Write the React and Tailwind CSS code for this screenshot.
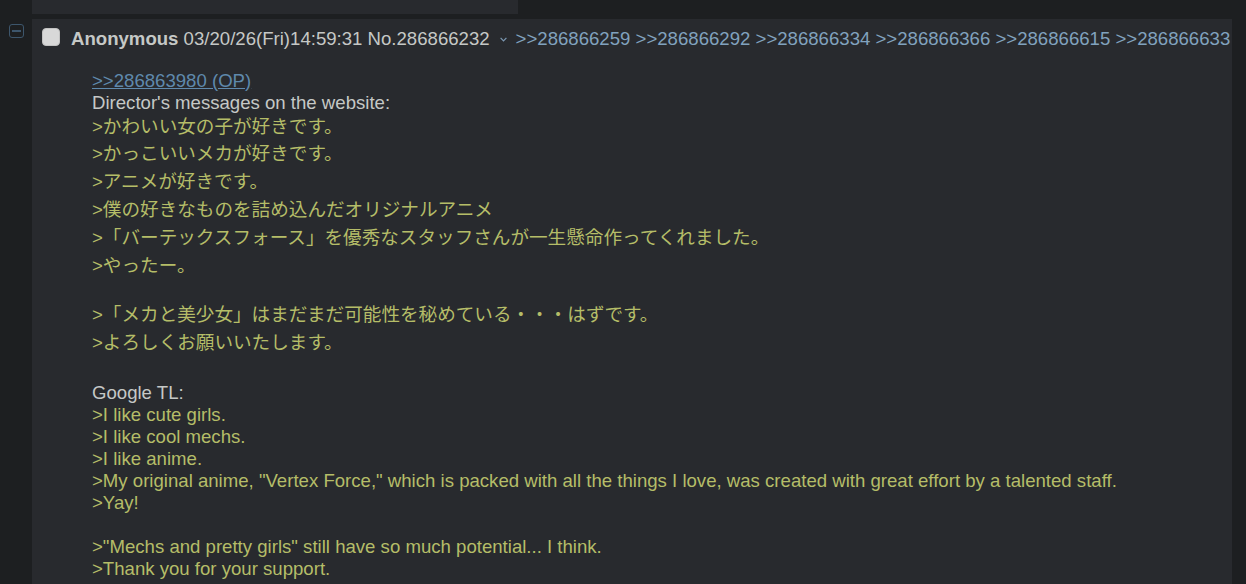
import React from "react";

const FONT = { fontFamily: '"Liberation Sans", Arial, "Noto Sans CJK JP", sans-serif' };

const jp = [
  ">かわいい女の子が好きです。",
  ">かっこいいメカが好きです。",
  ">アニメが好きです。",
  ">僕の好きなものを詰め込んだオリジナルアニメ",
  ">「バーテックスフォース」を優秀なスタッフさんが一生懸命作ってくれました。",
  ">やったー。",
];
const jp2 = [">「メカと美少女」はまだまだ可能性を秘めている・・・はずです。", ">よろしくお願いいたします。"];
const en = [
  ">I like cute girls.",
  ">I like cool mechs.",
  ">I like anime.",
  '>My original anime, "Vertex Force," which is packed with all the things I love, was created with great effort by a talented staff.',
  ">Yay!",
];
const en2 = ['>"Mechs and pretty girls" still have so much potential... I think.', ">Thank you for your support."];

const backlinks = ["286866259", "286866292", "286866334", "286866366", "286866615", "286866633"];

export default function App() {
  return (
    <div className="w-[1246px] h-[584px] overflow-hidden bg-[#1d1f21] text-[18.6px] text-[#c5c8c6]" style={FONT}>
      <div className="ml-[32px] w-[486px] h-[14px] bg-[#282a2e]" />
      <div className="mt-[5px] flex">
        <div className="w-[32px] shrink-0">
          <div className="ml-[9px] mt-[5px] w-[15px] h-[14px] rounded-[3px] border-[1.5px] border-[#3d566c] flex items-center justify-center">
            <div className="w-[9px] h-[1.5px] bg-[#3d566c]" />
          </div>
        </div>
        <div className="w-[1200px] h-[600px] bg-[#282a2e]">
          <div className="flex items-start pt-[9px] pl-[10px]">
            <span className="w-[18px] h-[18px] rounded-[4px] bg-[#d8d8d8] border border-[#c2c2c2] shrink-0" />
            <div className="ml-[11px] leading-[21.6px] whitespace-nowrap flex items-start">
              <span className="font-bold">Anonymous</span>
              <span>&nbsp;03/20/26(Fri)14:59:31 No.286866232</span>
              <svg className="ml-[10px] mr-[9px] mt-[9px]" width="7" height="5" viewBox="0 0 7 5">
                <path d="M0.6 0.8 L3.5 3.8 L6.4 0.8" fill="none" stroke="#7b98b2" strokeWidth="1.2" />
              </svg>
              <span className="text-[#81a2be]">
                {backlinks.map((b, i) => (
                  <React.Fragment key={b}>
                    {i > 0 ? " " : ""}
                    <span>&gt;&gt;{b}</span>
                  </React.Fragment>
                ))}
              </span>
            </div>
          </div>
          <div className="mt-[20px] pl-[60px]">
            <div className="leading-[22px]">
              <span className="text-[#5f89ac] underline">&gt;&gt;286863980 (OP)</span>
            </div>
            <div className="leading-[21px]">Director's messages on the website:</div>
            {jp.map((l) => (
              <div key={l} className="leading-[27.8px] text-[#b5bd68]">{l}</div>
            ))}
            <div className="h-[22px]" />
            {jp2.map((l) => (
              <div key={l} className="leading-[27.8px] text-[#b5bd68]">{l}</div>
            ))}
            <div className="h-[25px]" />
            <div className="leading-[22px]">Google TL:</div>
            {en.map((l) => (
              <div key={l} className="leading-[22px] text-[#b5bd68] whitespace-nowrap">{l}</div>
            ))}
            <div className="h-[22px]" />
            {en2.map((l) => (
              <div key={l} className="leading-[22px] text-[#b5bd68] whitespace-nowrap">{l}</div>
            ))}
          </div>
        </div>
      </div>
    </div>
  );
}
